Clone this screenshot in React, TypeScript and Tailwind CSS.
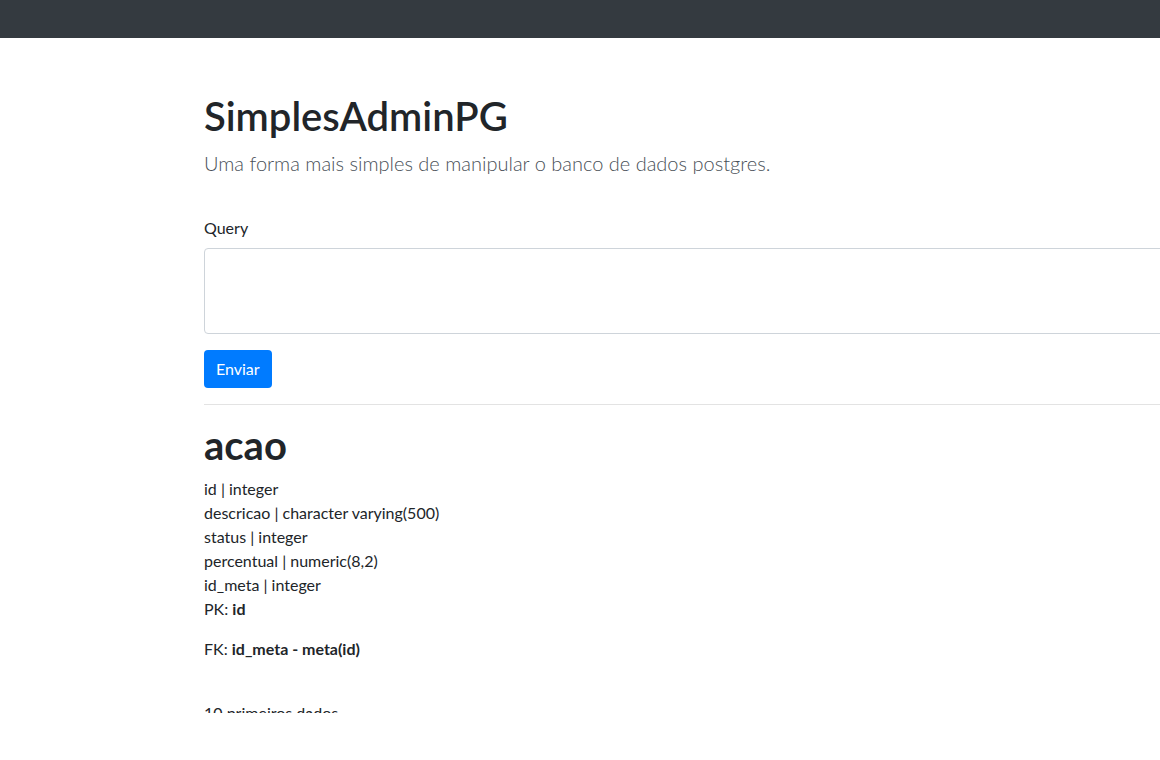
export default function App() {
  const cols = [
    "id | integer",
    "descricao | character varying(500)",
    "status | integer",
    "percentual | numeric(8,2)",
    "id_meta | integer",
  ];

  return (
    <div className="h-[760px] w-[1160px] overflow-hidden bg-white font-['Lato',sans-serif] text-[16px] leading-[24px] text-[#212529]">
      <nav className="h-[38px] bg-[#343a40]" />

      {/* page body is cut off below, as in the original window */}
      <div className="h-[675px] overflow-hidden">
        <main className="w-[1110px] pl-[204px] pt-[54px] box-content">
          <h1 className="mb-2 text-[40px] font-semibold leading-[48px]">SimplesAdminPG</h1>
          <p className="mb-4 text-[20px] font-light leading-[30px] text-[#495057]">
            Uma forma mais simples de manipular o banco de dados postgres.
          </p>

          <form className="mt-[38px]">
            <label className="mb-2 block">Query</label>
            <textarea
              className="mb-4 block h-[86px] w-full resize-none rounded border border-[#ced4da] px-3 py-1.5"
              rows={3}
            />
            <button
              type="button"
              className="h-[38px] rounded bg-[#007bff] px-3 text-white"
            >
              Enviar
            </button>
          </form>

          <hr className="my-4 border-t border-[#e3e3e3]" />

          <h1 className="mb-2 text-[40px] font-bold leading-[48px]">acao</h1>
          <div>
            {cols.map((c) => (
              <div key={c}>{c}</div>
            ))}
            <div>
              PK: <b>id</b>
            </div>
          </div>
          <p className="mt-4">
            FK: <b>id_meta - meta(id)</b>
          </p>
          <br />
          <p className="mt-4">10 primeiros dados</p>
        </main>
      </div>
    </div>
  );
}
